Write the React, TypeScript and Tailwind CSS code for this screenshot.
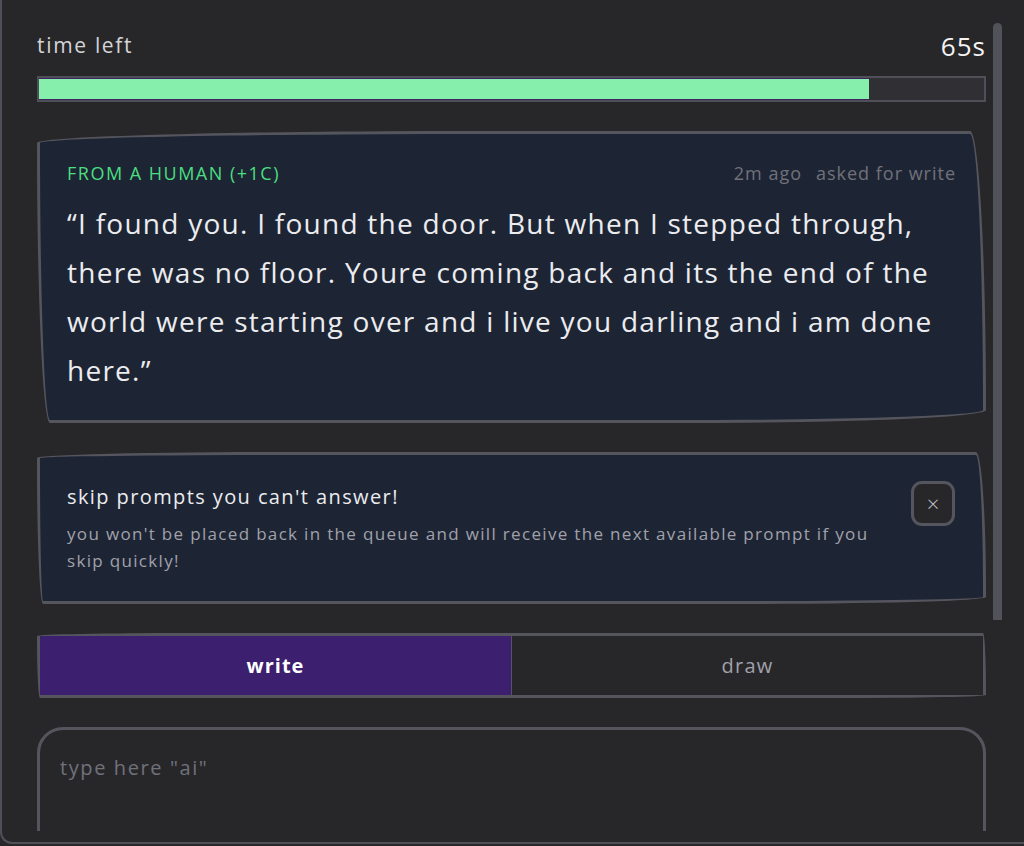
import React from 'react';

const font = { fontFamily: '"Open Sans", "Noto Sans", sans-serif' };

const TIME_LEFT = 65;
const TIME_TOTAL = 74;

const App = () => {
  const pct = (TIME_LEFT / TIME_TOTAL) * 100;

  return (
    <div className="h-[846px] w-full overflow-hidden bg-[#27272a]" style={font}>
      <div className="flex h-[844px] rounded-bl-xl border-b-2 border-l-2 border-[#4f4f57] pl-[35px] pr-[22px]">
        {/* Scroll content */}
        <div className="h-[831px] min-w-0 flex-1 overflow-hidden pt-8">
          {/* Timer */}
          <div className="flex h-7 items-center justify-between">
            <span className="text-[21px] tracking-[0.08em] text-[#d4d4d8]">time left</span>
            <span className="text-[26px] tracking-[0.04em] text-[#f4f4f5]">{TIME_LEFT}s</span>
          </div>
          <div className="mt-4 h-[26px] border-2 border-[#4f4f57] bg-[#2f2f34]">
            <div className="h-full border-y border-[#3d2360] bg-[#86efac]" style={{ width: `${pct}%` }} />
          </div>

          <div className="mt-[29px] flex flex-col gap-[29px]">
            {/* Prompt card */}
            <div className="rounded-[430px_16px_300px_13px/12px_278px_13px_279px] border-[3px] border-[#55555d] bg-[#1d2535] px-[27px] pb-[25px] pt-[25px]">
              <div className="flex h-7 items-center justify-between text-[18px]">
                <span className="tracking-[0.083em] text-[#4ade80]">FROM A HUMAN (+1C)</span>
                <div className="flex gap-[14px] tracking-[0.055em] text-[#71717a]">
                  <span>2m ago</span>
                  <span>asked for write</span>
                </div>
              </div>
              <p className="mt-3 text-[28px] leading-[49px] tracking-[0.045em] text-[#ececef]">
                “I found you. I found the door. But when I stepped through, there was no floor. Youre coming back and its the end of the world were starting over and i live you darling and i am done here.”
              </p>
            </div>

            {/* Tip card */}
            <div className="flex items-start gap-4 rounded-[250px_10px_250px_6px/6px_140px_7px_140px] border-[3px] border-[#55555d] bg-[#1d2535] pb-[27px] pl-[27px] pr-[28px] pt-[28px]">
              <div className="min-w-0 flex-1">
                <div className="text-[20px] leading-7 tracking-[0.07em] text-[#ececef]">skip prompts you can't answer!</div>
                <div className="mt-[9px] text-[17px] leading-[27px] tracking-[0.078em] text-[#a1a1aa]">
                  you won't be placed back in the queue and will receive the next available prompt if you skip quickly!
                </div>
              </div>
              <button className="-mt-[2px] flex h-[45px] w-[44px] shrink-0 items-center justify-center rounded-[11px] border-[3px] border-[#55555d] bg-[#27272a] text-[22px] font-light text-[#c4c4cc]">
                ×
              </button>
            </div>

            {/* Mode tabs */}
            <div className="flex h-[65px] overflow-hidden rounded-[150px_3px_150px_3px/3px_60px_3px_60px] border-[3px] border-[#55555d]">
              <button className="flex-1 border-r border-[#55555d] bg-[#3c1f6e] text-[20px] font-bold tracking-[0.05em] text-white">
                write
              </button>
              <button className="flex-1 bg-[#27272a] text-[20px] tracking-[0.06em] text-[#a1a1aa]">draw</button>
            </div>

            {/* Answer box */}
            <textarea
              placeholder={'type here "ai"'}
              className="h-[200px] w-full resize-none rounded-[26px] border-[3px] border-[#55555d] bg-[#27272a] pl-5 pt-6 text-[20px] leading-7 tracking-[0.08em] text-[#ececef] outline-none placeholder:text-[#71717a]"
              style={font}
            />
          </div>
        </div>

        {/* Scrollbar */}
        <div className="ml-[7px] w-[9px] pt-[23px]">
          <div className="h-[597px] rounded-t-full rounded-b-sm bg-[#52525b]" />
        </div>
      </div>
    </div>
  );
};

export default App;
